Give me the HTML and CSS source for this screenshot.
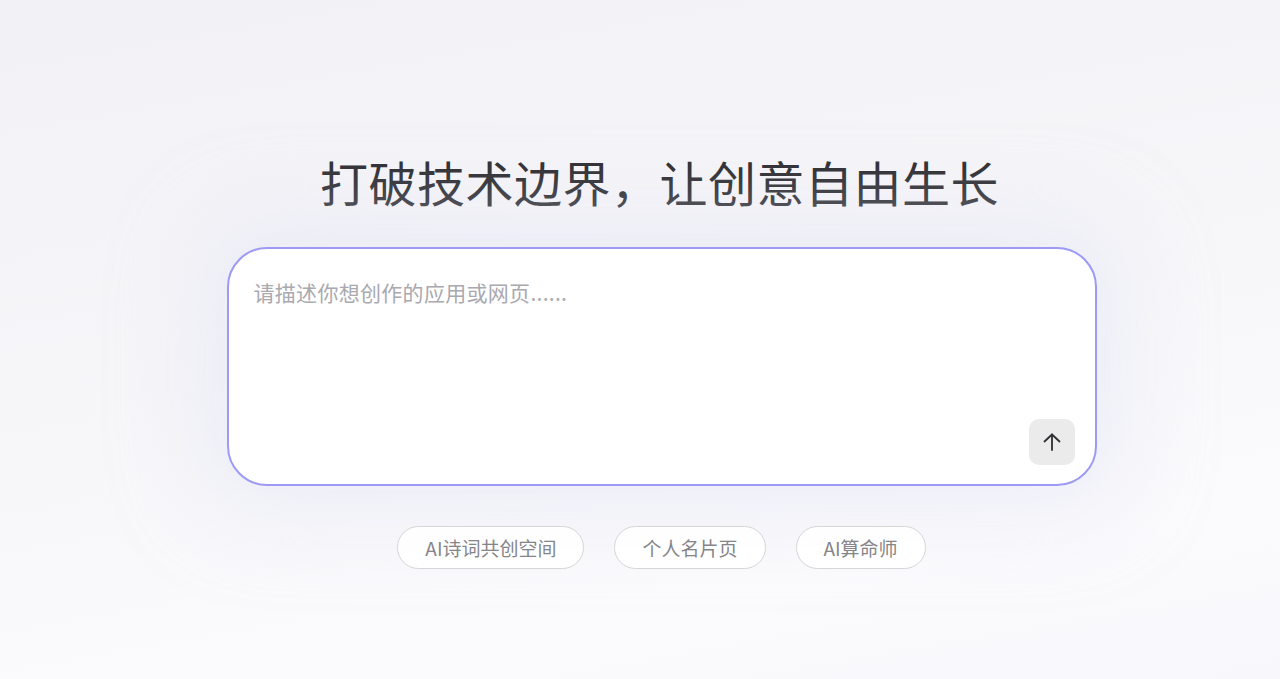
FILE: index.html
```html
<!DOCTYPE html>
<html lang="zh-CN">
<head>
<meta charset="utf-8">
<title>创意</title>
<link rel="stylesheet" href="styles.css">
</head>
<body>
<main class="page">
  <section class="hero">
    <h1 class="title">打破技术边界，让创意自由生长</h1>
    <div class="card">
      <div class="placeholder">请描述你想创作的应用或网页......</div>
      <div class="card-footer">
        <button class="send" type="button" aria-label="发送">
          <svg width="22" height="22" viewBox="0 0 22 22" fill="none" stroke="#2f2f33" stroke-width="1.8" stroke-linecap="round" stroke-linejoin="round">
            <path d="M11 19V3.5"/>
            <path d="M3.5 10.5L11 3.5l7.5 7"/>
          </svg>
        </button>
      </div>
    </div>
    <div class="chips">
      <button class="chip" type="button">AI诗词共创空间</button>
      <button class="chip" type="button">个人名片页</button>
      <button class="chip" type="button">AI算命师</button>
    </div>
  </section>
</main>
</body>
</html>
```
FILE: styles.css
```css
* { box-sizing: border-box; }
html, body { margin: 0; height: 100%; }
body {
  font-family: "Noto Sans CJK SC", "Noto Sans", sans-serif;
  background: linear-gradient(170deg, #f2f2f6 0%, #f6f6f9 45%, #fbfbfd 80%, #f8f8fc 100%);
  overflow: hidden;
}
.page {
  height: 679px;
  display: flex;
  justify-content: center;
  padding-left: 43px;
}
.hero {
  width: 870px;
  display: flex;
  flex-direction: column;
  align-items: center;
  padding-top: 148px;
}
.title {
  margin: 0;
  font-size: 48px;
  font-weight: 400;
  line-height: 66px;
  color: #2c2c31;
  letter-spacing: 0.5px;
  margin-left: -4px;
}
.card {
  margin-top: 33px;
  width: 870px;
  height: 239px;
  background: #ffffff;
  border: 2px solid #9c9af6;
  border-radius: 40px;
  padding: 28px 20px 19px 25px;
  display: flex;
  flex-direction: column;
  justify-content: space-between;
  box-shadow: 0 0 80px 30px rgba(228, 228, 246, 0.5);
}
.placeholder {
  font-size: 21px;
  line-height: 30px;
  letter-spacing: 0.3px;
  color: #a9a9af;
}
.card-footer {
  display: flex;
  justify-content: flex-end;
}
.send {
  width: 46px;
  height: 46px;
  border: none;
  border-radius: 10px;
  background: #ebebec;
  display: flex;
  align-items: center;
  justify-content: center;
  padding: 0;
}
.chips {
  margin-top: 40px;
  display: flex;
  gap: 30px;
}
.chip {
  height: 43px;
  padding: 0 27px;
  border: 1px solid #d6d6d9;
  border-radius: 22px;
  background: rgba(255, 255, 255, 0.9);
  font-family: "Noto Sans CJK SC", "Noto Sans", sans-serif;
  font-size: 19px;
  color: #858589;
  line-height: 1;
}
```
